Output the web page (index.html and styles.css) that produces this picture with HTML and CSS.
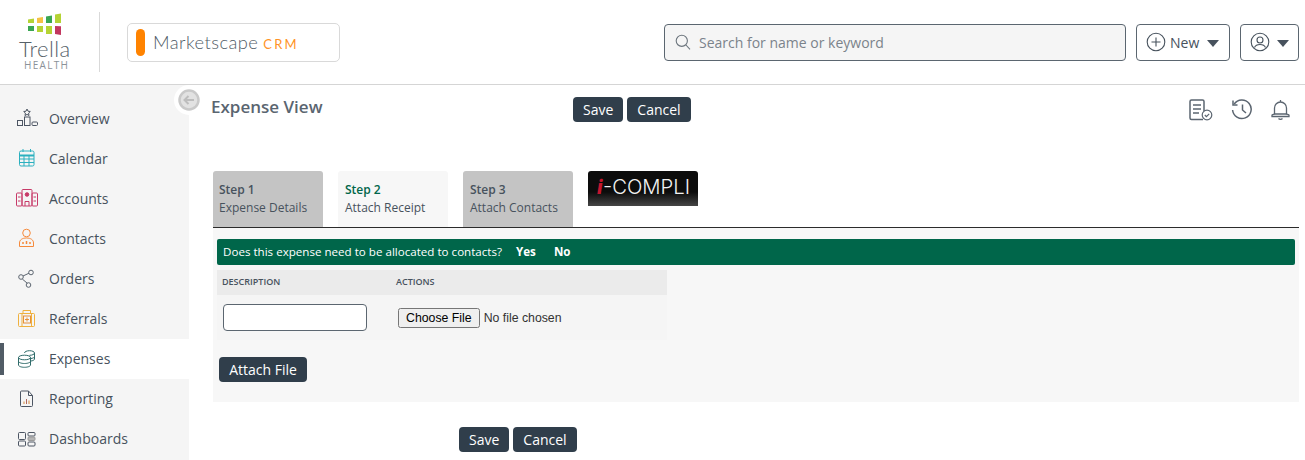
FILE: index.html
```html
<!DOCTYPE html>
<html lang="en">
<head>
<meta charset="utf-8">
<title>Expense View</title>
<link rel="stylesheet" href="styles.css">
</head>
<body>
<header class="topbar">
  <div class="brand">
    <svg class="brand-mark" width="38" height="24" viewBox="0 0 38 24">
      <path d="M1 6.500l6-1V10H1z" fill="#b5d334"/><path d="M10 5l6-1v6h-6z" fill="#f6c244"/><path d="M19 3.500l6-1V10h-6z" fill="#3aa652"/><path d="M28 1.500l6-1V10h-6z" fill="#b5d334"/>
      <path d="M1 13h6v5H1z" fill="#3aa652"/><path d="M10 13h6v6h-6z" fill="#b5d334"/><path d="M19 13h6v8h-6z" fill="#b5d334"/><path d="M28 13l6 .3V22l-6-1z" fill="#c2375f"/>
    </svg>
    <span class="brand-name">Trella</span>
    <span class="brand-sub">HEALTH</span>
  </div>
  <div class="product">
    <span class="product-pill"></span>
    <span class="product-name">Marketscape</span>
    <span class="product-crm">CRM</span>
  </div>
  <div class="search">
    <svg width="16" height="16" viewBox="0 0 16 16" fill="none" stroke="#6c757d" stroke-width="1.100"><circle cx="6.800" cy="6.800" r="5.600"/><path d="M11 11l4 4.300"/></svg>
    <span>Search for name or keyword</span>
  </div>
  <button class="outline new-btn" type="button">
    <svg width="20" height="20" viewBox="0 0 20 20" fill="none" stroke="#47525d" stroke-width="1.100"><circle cx="10" cy="10" r="8.800"/><path d="M10 5.500v9M5.500 10h9"/></svg>
    <span>New</span><i class="caret"></i>
  </button>
  <button class="outline user-btn" type="button" aria-label="Account">
    <svg width="20" height="20" viewBox="0 0 20 20" fill="none" stroke="#47525d" stroke-width="1.100"><circle cx="10" cy="10" r="8.800"/><circle cx="10" cy="8" r="3"/><path d="M4.500 15.500c1-2.500 3-3 5.500-3s4.500.5 5.500 3"/></svg>
    <i class="caret"></i>
  </button>
</header>
<div class="body-row">
  <nav class="sidebar">
    <span class="collapse"><svg width="24" height="24" viewBox="0 0 24 24" fill="#e2e2e2" stroke="#c9c9c9"><circle cx="12" cy="12" r="9.500" stroke-width="2.500"/><path d="M17 12H8M11.500 8l-4 4 4 4" fill="none" stroke="#bdbdbd" stroke-width="2"/></svg></span>
    <a class="nav-item">
      <svg class="nav-icon" viewBox="0 0 24 24" fill="none" stroke="#4c5563"><path d="M12 2l1 2.200 2.300.3-1.700 1.600.4 2.400-2-1.100-2 1.100.4-2.400-1.700-1.600 2.300-.3z"/><rect x="2.500" y="13.500" width="5" height="5"/><rect x="9.500" y="10" width="5.500" height="8.500"/><rect x="17" y="15" width="5.500" height="3.500" rx="1"/></svg>
      <span>Overview</span>
    </a>
    <a class="nav-item">
      <svg class="nav-icon" viewBox="0 0 24 24" fill="none" stroke="#2bb0bf"><rect x="4.500" y="4" width="14.500" height="15" rx="1.500"/><path d="M4.500 8.500h14.500" stroke-width="2"/><path d="M8 2v3M15.500 2v3M4.500 12h14.500M4.500 15.500h14.500M9 8.500V19M14 8.500V19"/></svg>
      <span>Calendar</span>
    </a>
    <a class="nav-item">
      <svg class="nav-icon" viewBox="0 0 24 24" fill="none" stroke="#c73a68"><rect x="7" y="2.500" width="10" height="16.500" rx="1"/><rect x="1.500" y="6" width="5.500" height="13" rx="1"/><rect x="17" y="6" width="5.500" height="13" rx="1"/><circle cx="12" cy="7.500" r="1.800" fill="#c73a68"/><path d="M10 19v-4.500h4V19M3 10h2.500M3 14h2.500M18.500 10H21M18.500 14H21"/></svg>
      <span>Accounts</span>
    </a>
    <a class="nav-item">
      <svg class="nav-icon" viewBox="0 0 24 24" fill="none" stroke="#f58a3c"><circle cx="11.500" cy="6" r="3.800"/><path d="M4.500 19.500v-3.500c0-3 2.500-5 7-5s7 2 7 5v3.500z"/><path d="M8 15v2M11.500 14v3M15 15v2" stroke-width="1.500"/></svg>
      <span>Contacts</span>
    </a>
    <a class="nav-item">
      <svg class="nav-icon" viewBox="0 0 24 24" fill="none" stroke="#5c6570"><circle cx="16" cy="5.500" r="2.300"/><circle cx="6" cy="10" r="2.300"/><circle cx="13.500" cy="18" r="2.300"/><path d="M8 9l6-2.800M7.300 12l5 4.300"/></svg>
      <span>Orders</span>
    </a>
    <a class="nav-item">
      <svg class="nav-icon" viewBox="0 0 24 24" fill="none" stroke="#efb13f"><rect x="3.500" y="6.500" width="16" height="13" rx="1"/><path d="M8 6.500V3.500h7.500v3M7 6.500v13M16.500 6.500v13"/><rect x="8.500" y="9" width="7" height="7" stroke="#e5903a"/><path d="M12 10.500v4M10 12.500h4" stroke="#e5903a"/></svg>
      <span>Referrals</span>
    </a>
    <a class="nav-item active">
      <svg class="nav-icon" viewBox="0 0 24 24" fill="none" stroke="#2f6b6a"><ellipse cx="9.500" cy="10.500" rx="6" ry="2.300"/><path d="M3.500 10.500v7.500c0 1.300 2.700 2.300 6 2.300s6-1 6-2.300v-7.500M3.500 14.200c0 1.300 2.700 2.300 6 2.300s6-1 6-2.300"/><path d="M9.500 6c0-1.300 2.200-2.300 5-2.300s5 1 5 2.300v6c0 1-1.500 1.800-4 2.100M19.500 6c0 1.300-2.200 2.300-5 2.300M19.500 9.500c0 1-1.500 1.800-4 2.100"/></svg>
      <span>Expenses</span>
    </a>
    <a class="nav-item">
      <svg class="nav-icon" viewBox="0 0 24 24" fill="none" stroke="#4c5563"><path d="M6.500 4h7l4 4.500v10a1 1 0 0 1-1 1h-10a1 1 0 0 1-1-1V5a1 1 0 0 1 1-1z"/><path d="M13.500 4v4.500h4"/><path d="M9 17v-2.500" stroke="#d98a3c"/><path d="M11.500 17v-5" stroke="#b0685c"/><path d="M14 17v-3.500" stroke="#d98a3c"/></svg>
      <span>Reporting</span>
    </a>
    <a class="nav-item">
      <svg class="nav-icon" viewBox="0 0 24 24" fill="none" stroke="#4c5563"><rect x="3.500" y="5.500" width="7" height="7" rx="1"/><rect x="3.500" y="14" width="7" height="5" rx="1"/><rect x="13" y="5.500" width="7" height="3.500" rx="1"/><rect x="13" y="10" width="7" height="3.500" rx="1" fill="#b5b5b5" stroke="#9a9a9a"/><rect x="13" y="15" width="7" height="4" rx="1"/></svg>
      <span>Dashboards</span>
    </a>
  </nav>
  <main class="content">
    <div class="title-row">
      <h1 class="page-title">Expense View</h1>
      <div class="btn-group">
        <button class="dark" type="button">Save</button>
        <button class="dark" type="button">Cancel</button>
      </div>
      <div class="page-tools">
        <svg width="24" height="22" viewBox="0 0 24 22" fill="none" stroke="#5b6570" stroke-width="1.500"><path d="M14 20.500H2.500a1.500 1.500 0 0 1-1.500-1.500V2.500A1.500 1.500 0 0 1 2.500 1h11A1.500 1.500 0 0 1 15 2.500V12"/><path d="M4 6h8M4 10h8M4 14h6"/><circle cx="18" cy="16" r="4.800" stroke-width="1.200"/><path d="M15.800 16l1.600 1.600 2.800-2.800" stroke-width="1.200"/></svg>
        <svg width="22" height="21" viewBox="0 0 22 21" fill="none" stroke="#5b6570" stroke-width="1.500"><path d="M3.200 5a9.300 9.300 0 1 1-1.600 6"/><path d="M2 1.500V6h4.500"/><path d="M11.500 5.500V11l3.500 3"/></svg>
        <svg width="19" height="21" viewBox="0 0 19 21" fill="none" stroke="#5b6570" stroke-width="1.300"><path d="M9.500 1v2M3.500 15.500V9a6 6 0 0 1 12 0v6.500"/><path d="M1 16c0-.5 2.500-.7 2.500-1h12c0 .3 2.500.5 2.500 1v1.500H1z"/><path d="M7.500 19.500c1 1 3 1 4 0"/></svg>
      </div>
    </div>
    <div class="tabs">
      <div class="tab"><strong>Step 1</strong><span>Expense Details</span></div>
      <div class="tab current"><strong>Step 2</strong><span>Attach Receipt</span></div>
      <div class="tab"><strong>Step 3</strong><span>Attach Contacts</span></div>
      <div class="compli"><em>i</em><span>-COMPLI</span></div>
    </div>
    <section class="panel">
      <div class="alert">
        <span>Does this expense need to be allocated to contacts?</span>
        <b>Yes</b>
        <b>No</b>
      </div>
      <table class="files">
        <thead>
          <tr><th class="col-desc">Description</th><th>Actions</th></tr>
        </thead>
        <tbody>
          <tr>
            <td class="col-desc"><input class="desc-input" type="text"></td>
            <td><input class="file-input" type="file"></td>
          </tr>
        </tbody>
      </table>
      <button class="dark attach" type="button">Attach File</button>
    </section>
    <div class="btn-group bottom">
      <button class="dark" type="button">Save</button>
      <button class="dark" type="button">Cancel</button>
    </div>
  </main>
</div>
</body>
</html>
```
FILE: styles.css
```css
* { box-sizing: border-box; }
html, body { margin: 0; height: 460px; overflow: hidden; background: #fff; }
body { font-family: "Open Sans", "Liberation Sans", sans-serif; color: #47525d; }

.topbar {
  height: 85px;
  display: flex;
  align-items: center;
  border-bottom: 1px solid #d5d5d5;
  padding-right: 6px;
}
.brand {
  width: 100px;
  height: 60px;
  margin: 0 27px 0 0;
  border-right: 1px solid #d9d9d9;
  display: flex;
  flex-direction: column;
  align-items: flex-start;
  padding-left: 19px;
}
.brand-mark { margin: 1px 0 0 8px; display: block; }
.brand-name { font-family: "Lato", sans-serif; font-weight: 300; font-size: 22px; letter-spacing: .4px; line-height: 22px; color: #566169; margin-top: 1px; }
.brand-sub { font-family: "Open Sans", sans-serif; font-size: 10px; line-height: 11px; letter-spacing: 1.300px; color: #8b9299; margin-left: 5px; }
.product {
  width: 213px;
  height: 39px;
  border: 1px solid #d9d9d9;
  border-radius: 5px;
  display: flex;
  align-items: center;
  padding-left: 8px;
}
.product-pill { width: 9px; height: 27px; border-radius: 5px; background: #ff8300; margin-right: 8px; }
.product-name { font-family: "Lato", sans-serif; font-weight: 300; font-size: 18.300px; color: #4f5b66; letter-spacing: .45px; }
.product-crm { font-family: "Lato", sans-serif; font-size: 13px; color: #ff9326; letter-spacing: 2.200px; margin-left: 5px; padding-top: 3px; }
.search {
  width: 462px;
  height: 37px;
  margin-left: 324px;
  border: 1px solid #5b6670;
  border-radius: 4px;
  background: #f5f5f5;
  display: flex;
  align-items: center;
  gap: 8px;
  padding-left: 10px;
  font-size: 14px;
  color: #7b838b;
}
.outline {
  height: 37px;
  background: #fff;
  border: 1px solid #5b6670;
  border-radius: 4px;
  display: flex;
  align-items: center;
  font-family: inherit;
  font-size: 14px;
  color: #47525d;
  padding: 0 0 0 9px;
}
.new-btn { width: 94px; margin-left: 10px; gap: 4px; }
.user-btn { width: 59px; margin-left: 10px; gap: 7px; }
.caret { width: 0; height: 0; border-left: 6px solid transparent; border-right: 6px solid transparent; border-top: 7px solid #47525d; margin: 2px 0 0 4px; }
.user-btn .caret { margin-left: 0; }

.body-row { display: flex; height: 375px; }
.sidebar {
  width: 189px;
  flex: none;
  background: #f5f5f5;
  padding-top: 14px;
  position: relative;
}
.collapse {
  position: absolute;
  left: 174px;
  top: 0;
  width: 30px;
  height: 30px;
  border-radius: 50%;
  background: #fff;
  display: flex;
  align-items: center;
  justify-content: center;
}
.nav-item {
  height: 40px;
  display: flex;
  align-items: center;
  padding-left: 15px;
  font-size: 14px;
  color: #47525d;
  position: relative;
}
.nav-item span { margin-bottom: 2px; }
.nav-icon { width: 24px; height: 24px; margin-right: 10px; flex: none; }
.nav-item.active { background: #fff; }
.nav-item.active::before {
  content: "";
  position: absolute;
  left: 0;
  top: 4px;
  bottom: 4px;
  width: 4px;
  background: #515c66;
}

.content { flex: 1; padding: 12px 6px 0 24px; min-width: 0; position: relative; }
.title-row { display: flex; align-items: flex-start; height: 25px; margin-left: -2px; }
.page-title { width: 362px; margin: 0; font-size: 17px; font-weight: 600; line-height: 19px; color: #5a6570; }
.btn-group { display: flex; gap: 4px; }
.dark {
  height: 25px;
  padding: 0 10px;
  border: 0;
  border-radius: 4px;
  background: #303e4b;
  color: #fff;
  font-family: inherit;
  font-size: 14px;
  line-height: 25px;
}
.page-tools { margin-left: auto; display: flex; gap: 18px; align-items: flex-start; padding: 2px 9px 0 0; }

.tabs { display: flex; gap: 15px; margin-top: 49px; height: 56px; }
.tab {
  width: 110px;
  height: 56px;
  background: #c4c4c4;
  border-radius: 3px 3px 0 0;
  padding: 9px 6px 0;
  font-size: 12px;
  line-height: 19px;
  color: #47525d;
}
.tab + .tab { padding-left: 7px; }
.tab strong { display: block; font-weight: 600; }
.tab span { display: block; margin-top: -1px; }
.tab.current { background: #f7f7f7; }
.tab.current strong { color: #00664a; }
.compli {
  width: 110px;
  height: 35px;
  border-radius: 3px 3px 0 0;
  background: linear-gradient(#0c0c0c 60%, #454545);
  color: #f2f2f2;
  font-family: "Inter", "Liberation Sans", sans-serif;
  font-weight: 300;
  font-size: 19.500px;
  line-height: 33px;
  padding-left: 9px;
  white-space: nowrap;
  overflow: hidden;
}
.compli em { color: #c4162e; font-weight: 800; }
.compli span { display: inline-block; transform: scaleX(1.040); transform-origin: left center; }

.panel {
  height: 175px;
  border-top: 1px solid #2b2b2b;
  background: #f7f7f7;
  padding: 11px 4px 0;
}
.alert {
  height: 26px;
  background: #00664a;
  border-radius: 2px;
  color: #fff;
  font-size: 11.600px;
  line-height: 26px;
  padding-left: 6px;
  display: flex;
}
.alert b { font-weight: 700; margin-left: 14px; margin-right: 4px; }
.files {
  width: 450px;
  border-collapse: collapse;
  margin-top: 5px;
}
.files th {
  height: 25px;
  background: #ebebeb;
  font-size: 9px;
  font-weight: 600;
  text-transform: uppercase;
  text-align: left;
  padding: 0 5px 3px;
  color: #47525d;
}
.files th + th { padding-left: 4px; }
.files td { height: 45px; padding: 0 6px; background: #f5f5f5; }
.files th.col-desc { width: 175px; }
.desc-input {
  display: block;
  width: 144px;
  height: 27px;
  border: 1px solid #5b6670;
  border-radius: 4px;
  background: #fff;
}
.file-input { font-family: "Liberation Sans", sans-serif; font-size: 12.300px; color: #333; display: block; }
.attach { display: block; margin: 17px 0 0 2px; width: 88px; padding: 0; }
.bottom { margin: 25px 0 0 246px; }
```
